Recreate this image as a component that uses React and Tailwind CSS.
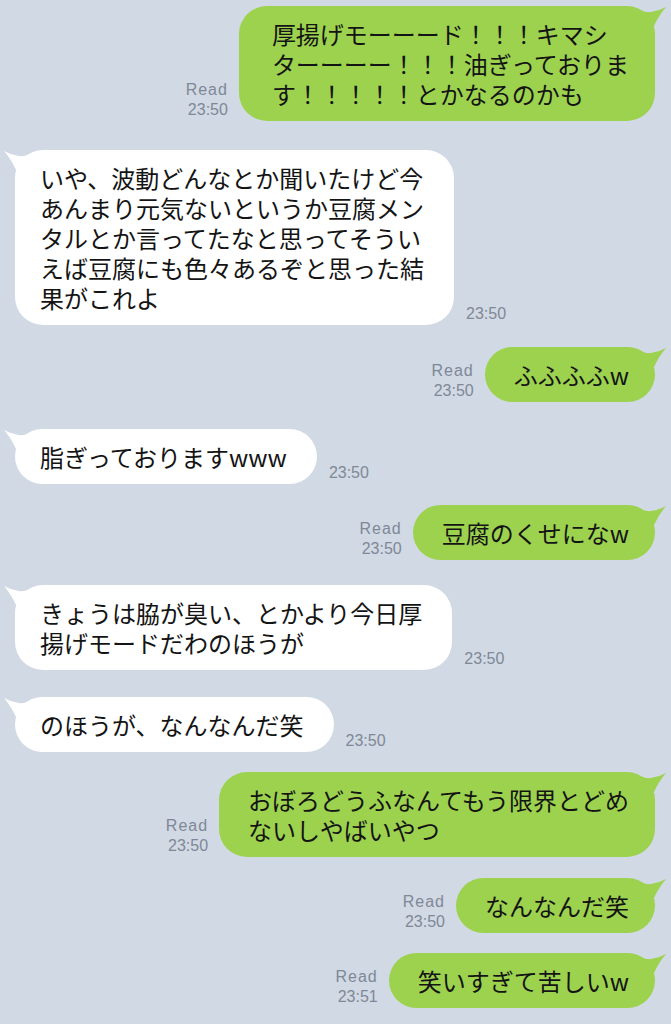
import React from "react";

const jp = { fontFamily: '"Noto Sans CJK JP", "Noto Sans", sans-serif' };
const lat = { fontFamily: '"Liberation Sans", Arial, sans-serif' };

function GreenTail() {
  return (
    <svg className="absolute top-0 right-[-12px] w-[44px] h-[30px]" viewBox="0 0 44 30">
      <path d="M10 0.8 Q20 7 28 6 Q36 5 43 1 Q36 9 31 20 L10 20 Z" fill="#9dd24f" />
    </svg>
  );
}

function WhiteTail() {
  return (
    <svg className="absolute top-0 left-[-12px] w-[44px] h-[30px]" viewBox="0 0 44 30">
      <path d="M34 0.8 Q24 7 16 6 Q8 5 1 1 Q8 9 13 20 L34 20 Z" fill="#ffffff" />
    </svg>
  );
}

function Lines({ lines }) {
  return lines.map((l, i) => (
    <div key={i} className="whitespace-nowrap">
      {l}
    </div>
  ));
}

function Sent({ lines, time, mt, pl = "pl-[29px]" }) {
  return (
    <div className={`flex justify-end items-end gap-[11px] ${mt}`}>
      <div
        className="text-right text-[16px] leading-[20px] text-[#7f8897] mb-[1px]"
        style={lat}
      >
        <div className="tracking-[1px]">Read</div>
        <div>{time}</div>
      </div>
      <div
        className={`relative rounded-[28px] bg-[#9dd24f] ${pl} pr-[26px] pt-[13px] pb-[12px] text-[24px] leading-[30px] text-[#141414]`}
        style={jp}
      >
        <GreenTail />
        <div className="relative">
          <Lines lines={lines} />
        </div>
      </div>
    </div>
  );
}

function Received({ lines, time, mt }) {
  return (
    <div className={`flex justify-start items-end gap-[12px] ${mt}`}>
      <div
        className="relative rounded-[28px] bg-white pl-[25px] pr-[30px] pt-[13px] pb-[12px] text-[24px] leading-[30px] text-[#141414]"
        style={jp}
      >
        <WhiteTail />
        <div className="relative">
          <Lines lines={lines} />
        </div>
      </div>
      <div className="text-[16px] leading-[20px] text-[#7f8897] mb-[1px]" style={lat}>
        {time}
      </div>
    </div>
  );
}

export default function App() {
  return (
    <div className="w-full h-[1024px] overflow-hidden bg-[#d1d9e4] pl-[15px] pr-[16px] pt-[6px]">
      <Sent
        mt="mt-0"
        pl="pl-[33px]"
        time="23:50"
        lines={["厚揚げモーーード！！！キマシ", "ターーーー！！！油ぎっておりま", "す！！！！！とかなるのかも"]}
      />
      <Received
        mt="mt-[29px]"
        time="23:50"
        lines={[
          "いや、波動どんなとか聞いたけど今",
          "あんまり元気ないというか豆腐メン",
          "タルとか言ってたなと思ってそうい",
          "えば豆腐にも色々あるぞと思った結",
          "果がこれよ",
        ]}
      />
      <Sent mt="mt-[22px]" time="23:50" lines={["ふふふふw"]} />
      <Received mt="mt-[27px]" time="23:50" lines={["脂ぎっておりますwww"]} />
      <Sent mt="mt-[21px]" time="23:50" lines={["豆腐のくせになw"]} />
      <Received
        mt="mt-[25px]"
        time="23:50"
        lines={["きょうは脇が臭い、とかより今日厚", "揚げモードだわのほうが"]}
      />
      <Received mt="mt-[27px]" time="23:50" lines={["のほうが、なんなんだ笑"]} />
      <Sent
        mt="mt-[20px]"
        time="23:50"
        lines={["おぼろどうふなんてもう限界とどめ", "ないしやばいやつ"]}
      />
      <Sent mt="mt-[21px]" time="23:50" lines={["なんなんだ笑"]} />
      <Sent mt="mt-[20px]" time="23:51" lines={["笑いすぎて苦しいw"]} />
    </div>
  );
}
